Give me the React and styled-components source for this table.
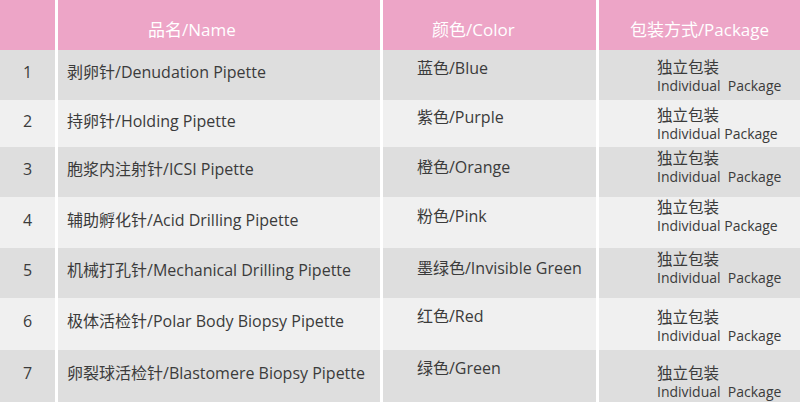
import React from 'react';
import styled, { createGlobalStyle } from 'styled-components';

const GlobalStyle = createGlobalStyle`
  html, body {
    margin: 0;
    padding: 0;
    background: #ffffff;
  }
  body {
    font-family: "Open Sans", "Noto Sans CJK SC", sans-serif;
  }
`;

const Table = styled.div`
  width: 800px;
  height: 402px;
  display: flex;
  flex-direction: column;
  overflow: hidden;
`;

const Row = styled.div`
  display: grid;
  grid-template-columns: 55px 322px 213px 1fr;
  column-gap: 3px;
  height: ${props => props.h}px;
`;

const HeadCell = styled.div`
  background-color: #eda5c7;
  color: #ffffff;
  font-size: 17px;
  display: flex;
  align-items: center;
  justify-content: ${props => (props.center ? 'center' : 'flex-start')};
  padding-left: ${props => props.pad || 0}px;
  padding-top: 6px;
`;

const Cell = styled.div`
  background-color: ${props => (props.odd ? '#dedede' : '#f0f0f0')};
  color: #3b3b3b;
  font-size: 16px;
  line-height: 20px;
`;

const NumCell = styled(Cell)`
  display: flex;
  align-items: center;
  justify-content: center;
  padding-bottom: 6px;
`;

const NameCell = styled(Cell)`
  display: flex;
  align-items: center;
  padding-left: 9px;
  padding-bottom: 6px;
`;

const ColorCell = styled(Cell)`
  padding-left: 34px;
  padding-top: ${props => props.top}px;
`;

const PackCell = styled(Cell)`
  padding-left: 58px;
  padding-top: ${props => props.top}px;
`;

const PackCn = styled.div`
  font-size: 15.5px;
  line-height: 18px;
`;

const PackEn = styled.div`
  font-size: 14px;
  line-height: 19px;
  white-space: pre;
`;

const items = [
  { cn: '剥卵针', en: 'Denudation Pipette', color: '蓝色/Blue', pack: 'Individual  Package', h: 50, ct: 8, pt: 8 },
  { cn: '持卵针', en: 'Holding Pipette', color: '紫色/Purple', pack: 'Individual Package', h: 47, ct: 7, pt: 6 },
  { cn: '胞浆内注射针', en: 'ICSI Pipette', color: '橙色/Orange', pack: 'Individual  Package', h: 50, ct: 10, pt: 2 },
  { cn: '辅助孵化针', en: 'Acid Drilling Pipette', color: '粉色/Pink', pack: 'Individual Package', h: 51, ct: 9, pt: 1 },
  { cn: '机械打孔针', en: 'Mechanical Drilling Pipette', color: '墨绿色/Invisible Green', pack: 'Individual  Package', h: 50, ct: 10, pt: 2 },
  { cn: '极体活检针', en: 'Polar Body Biopsy Pipette', color: '红色/Red', pack: 'Individual  Package', h: 52, ct: 8, pt: 10 },
  { cn: '卵裂球活检针', en: 'Blastomere Biopsy Pipette', color: '绿色/Green', pack: 'Individual  Package', h: 52, ct: 8, pt: 14 },
];

const App = () => {
  return (
    <>
      <GlobalStyle />
      <Table>
        <Row h={50}>
          <HeadCell />
          <HeadCell pad={90}>品名/Name</HeadCell>
          <HeadCell pad={49}>颜色/Color</HeadCell>
          <HeadCell center>包装方式/Package</HeadCell>
        </Row>
        {items.map((item, i) => {
          const odd = i % 2 === 0;
          return (
            <Row key={i} h={item.h}>
              <NumCell odd={odd}>{i + 1}</NumCell>
              <NameCell odd={odd}>{item.cn}/{item.en}</NameCell>
              <ColorCell odd={odd} top={item.ct}>{item.color}</ColorCell>
              <PackCell odd={odd} top={item.pt}>
                <PackCn>独立包装</PackCn>
                <PackEn>{item.pack}</PackEn>
              </PackCell>
            </Row>
          );
        })}
      </Table>
    </>
  );
};

export default App;
